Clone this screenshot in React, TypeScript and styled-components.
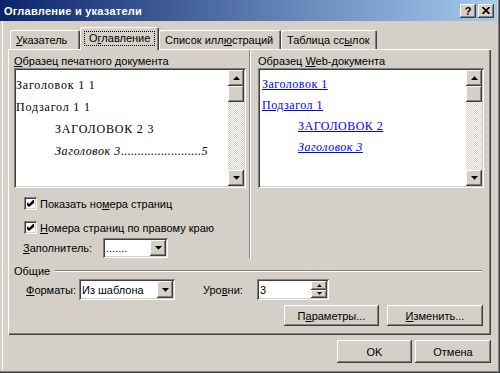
import React from 'react';
import styled, { createGlobalStyle, css } from 'styled-components';

const GlobalStyle = createGlobalStyle`
  html, body {
    margin: 0;
    padding: 0;
    background: #d4d0c8;
  }
  body {
    font-family: 'Liberation Sans', Arial, sans-serif;
    font-size: 11px;
    color: #000;
  }
`;

const raised = css`
  background: #d4d0c8;
  box-shadow: inset -1px -1px #404040, inset 1px 1px #fff, inset -2px -2px #808080,
    inset 2px 2px #d4d0c8;
`;

const sunken = css`
  background: #fff;
  box-shadow: inset 1px 1px #808080, inset -1px -1px #fff, inset 2px 2px #404040,
    inset -2px -2px #d4d0c8;
`;

const DownArrow = () => (
    <svg width="7" height="4" viewBox="0 0 7 4">
        <polygon points="0,0 7,0 3.5,3.7" fill="#000" />
    </svg>
);

const UpArrow = () => (
    <svg width="7" height="4" viewBox="0 0 7 4">
        <polygon points="0,4 7,4 3.5,0.3" fill="#000" />
    </svg>
);

const SmallDown = () => (
    <svg width="5" height="3" viewBox="0 0 5 3">
        <polygon points="0,0 5,0 2.5,2.8" fill="#000" />
    </svg>
);

const SmallUp = () => (
    <svg width="5" height="3" viewBox="0 0 5 3">
        <polygon points="0,3 5,3 2.5,0.2" fill="#000" />
    </svg>
);

const CheckMark = () => (
    <svg width="7" height="7" viewBox="0 0 7 7">
        <path d="M0 2 L2 4 L6 0 L7 0 L7 3 L2 7 L0 5 Z" fill="#000" />
    </svg>
);

const CloseGlyph = () => (
    <svg width="8" height="7" viewBox="0 0 8 7">
        <path d="M0.5 0 L7.5 7 M7.5 0 L0.5 7" stroke="#000" strokeWidth="1.6" />
    </svg>
);

const Scroller = () => (
    <Scrollbar>
        <ScrollButton>
            <UpArrow />
        </ScrollButton>
        <ScrollButton />
        <ScrollTrack />
        <ScrollButton>
            <DownArrow />
        </ScrollButton>
    </Scrollbar>
);

export default function App() {
    return (
        <>
            <GlobalStyle />
            <Window>
                <TitleBar>
                    <Title>Оглавление и указатели</Title>
                    <TitleButton>
                        <HelpGlyph>?</HelpGlyph>
                    </TitleButton>
                    <TitleButton>
                        <CloseGlyph />
                    </TitleButton>
                </TitleBar>
                <Body>
                    <TabStrip>
                        <Tab $width={70}>
                            <span>
                                <u>У</u>казатель
                            </span>
                        </Tab>
                        <ActiveTab $width={79}>
                            <FocusRect>
                                О<u>г</u>лавление
                            </FocusRect>
                        </ActiveTab>
                        <Tab $width={122}>
                            <span>
                                Список илл<u>ю</u>страций
                            </span>
                        </Tab>
                        <Tab $width={96}>
                            <span>
                                Таблица сс<u>ы</u>лок
                            </span>
                        </Tab>
                    </TabStrip>
                    <Panel>
                        <TopArea>
                            <LeftColumn>
                                <GroupLabel>
                                    <u>О</u>бразец печатного документа
                                </GroupLabel>
                                <PreviewBox>
                                    <PrintPreview>
                                        <PrintLine>Заголовок 1 1</PrintLine>
                                        <PrintLine>Подзагол 1 1</PrintLine>
                                        <PrintLine $indent={39}>ЗАГОЛОВОК 2 3</PrintLine>
                                        <TocEntry $indent={39}>
                                            Заголовок 3<Leader>........................</Leader>5
                                        </TocEntry>
                                    </PrintPreview>
                                    <Scroller />
                                </PreviewBox>
                                <CheckRow $top={9}>
                                    <CheckBox>
                                        <CheckMark />
                                    </CheckBox>
                                    <span>
                                        Показать но<u>м</u>ера страниц
                                    </span>
                                </CheckRow>
                                <CheckRow $top={11}>
                                    <CheckBox>
                                        <CheckMark />
                                    </CheckBox>
                                    <span>
                                        <u>Н</u>омера страниц по правому краю
                                    </span>
                                </CheckRow>
                                <FillerRow>
                                    <FieldLabel $width={80}>
                                        <u>З</u>аполнитель:
                                    </FieldLabel>
                                    <Combo $width={65} $height={20}>
                                        <ComboText>.......</ComboText>
                                        <DropButton>
                                            <DownArrow />
                                        </DropButton>
                                    </Combo>
                                </FillerRow>
                            </LeftColumn>
                            <Separator />
                            <RightColumn>
                                <GroupLabel>
                                    Образец <u>W</u>eb-документа
                                </GroupLabel>
                                <PreviewBox>
                                    <WebPreview>
                                        <WebLine>
                                            <WebLink>Заголовок 1</WebLink>
                                        </WebLine>
                                        <WebLine>
                                            <WebLink>Подзагол 1</WebLink>
                                        </WebLine>
                                        <WebLine $indent={36}>
                                            <WebLink>ЗАГОЛОВОК 2</WebLink>
                                        </WebLine>
                                        <WebLine $indent={36}>
                                            <WebLink $italic>Заголовок 3</WebLink>
                                        </WebLine>
                                    </WebPreview>
                                    <Scroller />
                                </PreviewBox>
                            </RightColumn>
                        </TopArea>
                        <GroupHeader>
                            <span>Общие</span>
                            <EtchedLine />
                        </GroupHeader>
                        <FormatRow>
                            <FieldLabel $width={53}>
                                <u>Ф</u>орматы:
                            </FieldLabel>
                            <Combo $width={96} $height={21}>
                                <ComboText>Из шаблона</ComboText>
                                <DropButton>
                                    <DownArrow />
                                </DropButton>
                            </Combo>
                            <FieldLabel $width={54} $offset={28}>
                                Уро<u>в</u>ни:
                            </FieldLabel>
                            <Spin>
                                <ComboText>3</ComboText>
                                <SpinButtons>
                                    <SpinButton>
                                        <SmallUp />
                                    </SpinButton>
                                    <SpinButton>
                                        <SmallDown />
                                    </SpinButton>
                                </SpinButtons>
                            </Spin>
                        </FormatRow>
                        <PanelButtons>
                            <PushButton $width={95} $height={21}>
                                <span>
                                    П<u>а</u>раметры...
                                </span>
                            </PushButton>
                            <PushButton $width={96} $height={21}>
                                <span>
                                    <u>И</u>зменить...
                                </span>
                            </PushButton>
                        </PanelButtons>
                    </Panel>
                    <Footer>
                        <PushButton $width={75} $height={23}>
                            OK
                        </PushButton>
                        <PushButton $width={76} $height={23}>
                            Отмена
                        </PushButton>
                    </Footer>
                </Body>
            </Window>
        </>
    );
}

const Window = styled.div`
    width: 500px;
    height: 373px;
    box-sizing: border-box;
    background: #d4d0c8;
    padding: 0 3px 3px 0;
    box-shadow: inset -1px -1px #404040, inset -2px -2px #808080;
    display: flex;
    flex-direction: column;
`;

const TitleBar = styled.div`
    height: 21px;
    flex: none;
    display: flex;
    align-items: center;
    gap: 2px;
    padding: 0 3px 0 4px;
    background: linear-gradient(to right, #0a246a, #a6caf0);
`;

const Title = styled.div`
    flex: 1;
    color: #fff;
    font-weight: bold;
    font-size: 11px;
    letter-spacing: 0.25px;
    white-space: nowrap;
`;

const TitleButton = styled.div`
    ${raised};
    width: 16px;
    height: 14px;
    display: flex;
    align-items: center;
    justify-content: center;
`;

const HelpGlyph = styled.span`
    font-weight: bold;
    font-size: 11px;
    line-height: 11px;
    margin-top: 1px;
`;

const Body = styled.div`
    flex: 1;
    margin-left: 2px;
    border-left: 1px solid #fff;
    padding: 6px 6px 7px 5px;
    display: flex;
    flex-direction: column;
`;

const TabStrip = styled.div`
    height: 22px;
    display: flex;
    align-items: flex-end;
    padding-left: 2px;
    flex: none;
`;

const Tab = styled.div<{ $width: number }>`
    width: ${({ $width }) => $width}px;
    height: 19px;
    box-sizing: border-box;
    padding-left: 6px;
    display: flex;
    align-items: center;
    white-space: nowrap;
    border-radius: 2px 2px 0 0;
    box-shadow: inset 1px 1px #fff, inset -1px 0 #404040, inset -2px 0 #808080;
`;

const ActiveTab = styled(Tab)`
    position: relative;
    z-index: 2;
    height: 23px;
    margin-bottom: -1px;
    padding-left: 4px;
    background: #d4d0c8;
    align-items: flex-start;
    padding-top: 4px;
`;

const FocusRect = styled.span`
    border: 1px dotted #000;
    padding: 0 4px 0 4px;
    line-height: 13px;
`;

const Panel = styled.div`
    height: 286px;
    flex: none;
    box-sizing: border-box;
    padding: 1px 7px 9px 6px;
    display: flex;
    flex-direction: column;
    box-shadow: inset 1px 1px #fff, inset -1px -1px #404040, inset -2px -2px #808080;
`;

const TopArea = styled.div`
    height: 208px;
    display: flex;
`;

const LeftColumn = styled.div`
    width: 232px;
    padding-top: 5px;
    display: flex;
    flex-direction: column;
`;

const RightColumn = styled(LeftColumn)`
    width: 226px;
`;

const Separator = styled.div`
    width: 2px;
    margin: 0 7px 0 3px;
    box-sizing: border-box;
    border-left: 1px solid #808080;
    border-right: 1px solid #fff;
`;

const GroupLabel = styled.div`
    height: 13px;
    line-height: 13px;
    white-space: nowrap;
`;

const PreviewBox = styled.div`
    ${sunken};
    height: 120px;
    box-sizing: border-box;
    padding: 2px;
    display: flex;
`;

const PrintPreview = styled.div`
    flex: 1;
    padding-top: 4px;
    font-family: 'Liberation Serif', 'Times New Roman', serif;
    font-size: 12px;
    letter-spacing: 0.8px;
`;

const PrintLine = styled.div<{ $indent?: number }>`
    line-height: 22px;
    height: 22px;
    padding-left: ${({ $indent }) => $indent ?? 0}px;
    white-space: nowrap;
`;

const TocEntry = styled.div<{ $indent: number }>`
    margin-left: ${({ $indent }) => $indent}px;
    line-height: 22px;
    height: 22px;
    font-style: italic;
    white-space: nowrap;
    letter-spacing: 0.6px;
`;

const Leader = styled.span`
    letter-spacing: 0.35px;
`;

const WebPreview = styled.div`
    flex: 1;
    padding: 4px 0 0 2px;
    font-family: 'Liberation Serif', 'Times New Roman', serif;
    font-size: 12px;
    letter-spacing: 0.5px;
`;

const WebLine = styled.div<{ $indent?: number }>`
    line-height: 21px;
    height: 21px;
    padding-left: ${({ $indent }) => $indent ?? 0}px;
    white-space: nowrap;
`;

const WebLink = styled.span<{ $italic?: boolean }>`
    color: #0000ff;
    text-decoration: underline;
    font-style: ${({ $italic }) => ($italic ? 'italic' : 'normal')};
`;

const Scrollbar = styled.div`
    width: 16px;
    flex: none;
    display: flex;
    flex-direction: column;
`;

const ScrollButton = styled.div`
    ${raised};
    height: 16px;
    flex: none;
    display: flex;
    align-items: center;
    justify-content: center;
`;

const ScrollTrack = styled.div`
    flex: 1;
    background-color: #fff;
    background-image: repeating-conic-gradient(#d4d0c8 0 25%, #fff 0 50%);
    background-size: 2px 2px;
`;

const CheckRow = styled.div<{ $top: number }>`
    margin-top: ${({ $top }) => $top}px;
    height: 13px;
    padding-left: 10px;
    display: flex;
    align-items: center;
    gap: 3px;
    white-space: nowrap;
`;

const CheckBox = styled.div`
    ${sunken};
    width: 13px;
    height: 13px;
    flex: none;
    display: flex;
    align-items: center;
    justify-content: center;
`;

const FillerRow = styled.div`
    margin-top: 4px;
    height: 20px;
    padding-left: 9px;
    display: flex;
    align-items: center;
`;

const FieldLabel = styled.div<{ $width: number; $offset?: number }>`
    width: ${({ $width }) => $width}px;
    margin-left: ${({ $offset }) => $offset ?? 0}px;
    flex: none;
    white-space: nowrap;
`;

const Combo = styled.div<{ $width: number; $height: number }>`
    ${sunken};
    width: ${({ $width }) => $width}px;
    height: ${({ $height }) => $height}px;
    box-sizing: border-box;
    padding: 2px;
    display: flex;
    align-items: stretch;
`;

const ComboText = styled.div`
    flex: 1;
    padding-left: 1px;
    display: flex;
    align-items: center;
    white-space: nowrap;
    overflow: hidden;
`;

const DropButton = styled.div`
    ${raised};
    width: 16px;
    flex: none;
    display: flex;
    align-items: center;
    justify-content: center;
`;

const GroupHeader = styled.div`
    margin-top: 6px;
    height: 13px;
    display: flex;
    align-items: center;
`;

const EtchedLine = styled.div`
    flex: 1;
    height: 2px;
    box-sizing: border-box;
    margin: 0 2px 0 5px;
    border-top: 1px solid #808080;
    border-bottom: 1px solid #fff;
`;

const FormatRow = styled.div`
    margin-top: 2px;
    height: 21px;
    padding-left: 12px;
    display: flex;
    align-items: center;
`;

const Spin = styled.div`
    ${sunken};
    width: 72px;
    height: 21px;
    box-sizing: border-box;
    padding: 2px;
    display: flex;
`;

const SpinButtons = styled.div`
    width: 16px;
    display: flex;
    flex-direction: column;
`;

const SpinButton = styled.div`
    ${raised};
    flex: 1;
    display: flex;
    align-items: center;
    justify-content: center;
`;

const PanelButtons = styled.div`
    margin-top: 5px;
    padding-right: 1px;
    display: flex;
    justify-content: flex-end;
    gap: 8px;
`;

const PushButton = styled.div<{ $width: number; $height: number }>`
    ${raised};
    width: ${({ $width }) => $width}px;
    height: ${({ $height }) => $height}px;
    display: flex;
    align-items: center;
    justify-content: center;
    white-space: nowrap;
`;

const Footer = styled.div`
    margin-top: 5px;
    display: flex;
    justify-content: flex-end;
    gap: 3px;
`;
